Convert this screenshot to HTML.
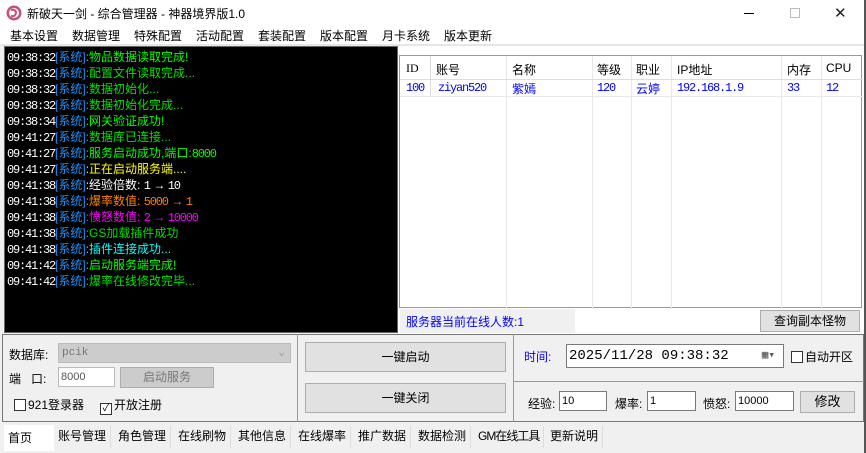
<!DOCTYPE html>
<html><head><meta charset="utf-8"><style>
*{margin:0;padding:0;box-sizing:border-box}
body{width:866px;height:453px;background:#f0f0f0;font-family:"Liberation Sans","Noto Sans CJK SC",sans-serif;font-size:12px;position:relative;overflow:hidden;color:#000}
.abs{position:absolute}
#title{left:0;top:0;width:864px;height:26px;background:#fff}
#menu{left:0;top:26px;width:864px;height:18px;background:#fff}
#menu span{position:absolute;top:1px;font-size:12px}
#log{left:4px;top:46px;width:394px;height:287px;background:#000;border:1px solid #666}
.l{position:absolute;left:2px;height:16px;white-space:nowrap;font-size:12px;line-height:16px}
.t{font-family:"Liberation Mono",monospace;font-size:12px;letter-spacing:-1.2px;color:#fff}
.s{color:#1e90ff}
.n{font-family:"Liberation Mono",monospace;font-size:12px;letter-spacing:-1.2px}
#grid{left:399px;top:55px;width:463px;height:253px;background:#fff;border:1px solid #999}
.vl{position:absolute;top:0;width:1px;height:253px;background:#e8e8e8}
.hl{position:absolute;left:0;height:1px;width:463px;background:#e8e8e8}
.c{position:absolute;font-size:12px}
.btn{position:absolute;background:#e1e1e1;border:1px solid #adadad;text-align:center;font-size:12px}
.inp{position:absolute;background:#fff;border:1px solid #7a7a7a;font-size:11px;padding-left:2px}
.cb{display:inline-block;width:12px;height:12px;border:1px solid #333;background:#fff;vertical-align:-2px;margin-right:2px}
.tab{position:absolute;top:0;height:22px;line-height:20px;border-right:1px solid #ddd;padding:0 4px}
</style></head><body>
<div class="abs" style="left:864px;top:0;width:2px;height:453px;background:#555"></div>
<div class="abs" id="title">
 <svg class="abs" style="left:6px;top:5px" width="16" height="16"><circle cx="8" cy="8" r="7.5" fill="#c8507a"/><circle cx="8" cy="8" r="5" fill="#fff"/><path d="M5 5 Q10 4 10 8 Q9 12 5 11" stroke="#c8507a" stroke-width="2" fill="none"/></svg>
 <span class="abs" style="left:27px;top:5px;font-size:12px">新破天一剑 - 综合管理器 - 神器境界版1.0</span>
 <div class="abs" style="left:744px;top:13px;width:10px;height:1px;background:#000"></div>
 <div class="abs" style="left:790px;top:8px;width:10px;height:10px;border:1px solid #bbb"></div>
 <span class="abs" style="left:834px;top:4px;font-size:15px;color:#222">✕</span>
</div>
<div class="abs" id="menu">
 <span style="left:10px">基本设置</span><span style="left:72px">数据管理</span><span style="left:134px">特殊配置</span><span style="left:196px">活动配置</span><span style="left:258px">套装配置</span><span style="left:320px">版本配置</span><span style="left:382px">月卡系统</span><span style="left:444px">版本更新</span>
</div>
<div class="abs" style="left:0;top:44px;width:864px;height:2px;background:#e6e6e6"></div>
<div class="abs" id="log">
<div class="l" style="top:2px"><span class="t">09:38:32</span><span class="s">[系统]</span><span style="color:#00ff00">:物品数据读取完成!</span></div>
<div class="l" style="top:18px"><span class="t">09:38:32</span><span class="s">[系统]</span><span style="color:#00e000">:配置文件读取完成...</span></div>
<div class="l" style="top:34px"><span class="t">09:38:32</span><span class="s">[系统]</span><span style="color:#00e000">:数据初始化...</span></div>
<div class="l" style="top:50px"><span class="t">09:38:32</span><span class="s">[系统]</span><span style="color:#00e000">:数据初始化完成...</span></div>
<div class="l" style="top:66px"><span class="t">09:38:34</span><span class="s">[系统]</span><span style="color:#00ff00">:网关验证成功!</span></div>
<div class="l" style="top:82px"><span class="t">09:41:27</span><span class="s">[系统]</span><span style="color:#00e000">:数据库已连接...</span></div>
<div class="l" style="top:98px"><span class="t">09:41:27</span><span class="s">[系统]</span><span style="color:#00ff00">:服务启动成功,端口:<span class="n">8000</span></span></div>
<div class="l" style="top:114px"><span class="t">09:41:27</span><span class="s">[系统]</span><span style="color:#ffff00">:正在启动服务端....</span></div>
<div class="l" style="top:130px"><span class="t">09:41:38</span><span class="s">[系统]</span><span style="color:#fff">:经验倍数: <span class="n">1 → 10</span></span></div>
<div class="l" style="top:146px"><span class="t">09:41:38</span><span class="s">[系统]</span><span style="color:#ff8000">:爆率数值: <span class="n">5000 → 1</span></span></div>
<div class="l" style="top:162px"><span class="t">09:41:38</span><span class="s">[系统]</span><span style="color:#ff00ff">:愤怒数值: <span class="n">2 → 10000</span></span></div>
<div class="l" style="top:178px"><span class="t">09:41:38</span><span class="s">[系统]</span><span style="color:#00e000">:GS加载插件成功</span></div>
<div class="l" style="top:194px"><span class="t">09:41:38</span><span class="s">[系统]</span><span style="color:#00ffff">:插件连接成功...</span></div>
<div class="l" style="top:210px"><span class="t">09:41:42</span><span class="s">[系统]</span><span style="color:#00ff00">:启动服务端完成!</span></div>
<div class="l" style="top:226px"><span class="t">09:41:42</span><span class="s">[系统]</span><span style="color:#00e000">:爆率在线修改完毕...</span></div>
</div>
<div class="abs" style="left:398px;top:46px;width:466px;height:288px;background:#fff"></div>
<div class="abs" id="grid">
 <div class="vl" style="left:30px;background:#ddd;height:40px"></div><div class="vl" style="left:106px"></div><div class="vl" style="left:192px"></div><div class="vl" style="left:231px"></div><div class="vl" style="left:271px"></div><div class="vl" style="left:381px"></div><div class="vl" style="left:421px"></div>
 <div class="hl" style="top:23px;background:#ddd"></div><div class="hl" style="top:40px"></div>
 <span class="c" style="left:6px;top:5px;font-family:'Liberation Serif',serif">ID</span><span class="c" style="left:36px;top:5px">账号</span><span class="c" style="left:112px;top:5px">名称</span><span class="c" style="left:197px;top:5px">等级</span><span class="c" style="left:236px;top:5px">职业</span><span class="c" style="left:277px;top:5px">IP地址</span><span class="c" style="left:387px;top:5px">内存</span><span class="c" style="left:426px;top:5px">CPU</span>
 <span class="c n" style="left:6px;top:25px;color:#00f">100</span><span class="c n" style="left:38px;top:25px;color:#00f">ziyan520</span><span class="c" style="left:112px;top:24px;color:#00f">紫嫣</span><span class="c n" style="left:197px;top:25px;color:#00f">120</span><span class="c" style="left:236px;top:24px;color:#00f">云婷</span><span class="c n" style="left:277px;top:25px;color:#00f">192.168.1.9</span><span class="c n" style="left:387px;top:25px;color:#00f">33</span><span class="c n" style="left:426px;top:25px;color:#00f">12</span>
</div>
<div class="abs" style="left:400px;top:309px;width:175px;height:24px;background:#f0f0f0;color:#00f;font-size:12px;padding:4px 0 0 6px">服务器当前在线人数:1</div>
<div class="btn" style="left:760px;top:310px;width:100px;height:22px;line-height:20px">查询副本怪物</div>
<div class="abs" style="left:2px;top:334px;width:862px;height:88px;border:1px solid #777"></div>
<div class="abs" style="left:297px;top:334px;width:1px;height:88px;background:#999"></div>
<div class="abs" style="left:513px;top:334px;width:1px;height:88px;background:#999"></div>
<div class="abs" style="left:513px;top:381px;width:351px;height:1px;background:#999"></div>
<span class="abs" style="left:9px;top:346px">数据库:</span>
<div class="abs" style="left:58px;top:343px;width:233px;height:20px;background:#ccc;border:1px solid #bbb;color:#777;font-family:'Liberation Mono',monospace;font-size:11px;padding:3px 3px">pcik<span style="position:absolute;right:5px;top:1px;color:#999">⌄</span></div>
<span class="abs" style="left:9px;top:370px">端&nbsp;&nbsp;&nbsp;口:</span>
<div class="inp" style="left:58px;top:367px;width:57px;height:20px;line-height:18px;border-color:#bbb;color:#555">8000</div>
<div class="btn" style="left:120px;top:367px;width:94px;height:21px;line-height:19px;color:#777;background:#ccc">启动服务</div>
<span class="abs" style="left:14px;top:396px"><span class="cb"></span>921登录器</span>
<span class="abs" style="left:100px;top:396px"><span class="cb" style="font-size:10px;line-height:9px;text-align:center">✓</span>开放注册</span>
<div class="btn" style="left:305px;top:342px;width:201px;height:30px;line-height:28px">一键启动</div>
<div class="btn" style="left:305px;top:383px;width:201px;height:30px;line-height:28px">一键关闭</div>
<span class="abs" style="left:524px;top:348px;color:#00f">时间:</span>
<div class="inp" style="left:566px;top:344px;width:218px;height:24px;line-height:22px;font-size:14px;font-family:'Liberation Mono',monospace;color:#000">2025/11/28 09:38:32<span style="position:absolute;right:8px;top:0;font-size:11px;color:#555">▦▾</span></div>
<span class="abs" style="left:791px;top:348px"><span class="cb"></span>自动开区</span>
<span class="abs" style="left:528px;top:395px">经验:</span>
<div class="inp" style="left:559px;top:391px;width:48px;height:20px;line-height:18px">10</div>
<span class="abs" style="left:615px;top:395px">爆率:</span>
<div class="inp" style="left:647px;top:391px;width:49px;height:20px;line-height:18px">1</div>
<span class="abs" style="left:703px;top:395px">愤怒:</span>
<div class="inp" style="left:735px;top:391px;width:59px;height:20px;line-height:18px">10000</div>
<div class="btn" style="left:800px;top:391px;width:55px;height:22px;line-height:20px;font-size:13px">修改</div>
<div class="abs" style="left:4px;top:425px;width:50px;height:26px;background:#fff"></div>
<div class="abs" style="left:4px;top:426px;width:600px;height:22px;font-size:12px;white-space:nowrap">
<span style="position:absolute;left:4px;top:3px">首页</span>
<span class="tab" style="left:50px">账号管理</span>
<span class="tab" style="left:110px">角色管理</span>
<span class="tab" style="left:170px">在线刷物</span>
<span class="tab" style="left:230px">其他信息</span>
<span class="tab" style="left:290px">在线爆率</span>
<span class="tab" style="left:350px">推广数据</span>
<span class="tab" style="left:410px">数据检测</span>
<span class="tab" style="left:470px;letter-spacing:-1px">GM在线工具</span>
<span class="tab" style="left:542px">更新说明</span>
</div>
</body></html>
